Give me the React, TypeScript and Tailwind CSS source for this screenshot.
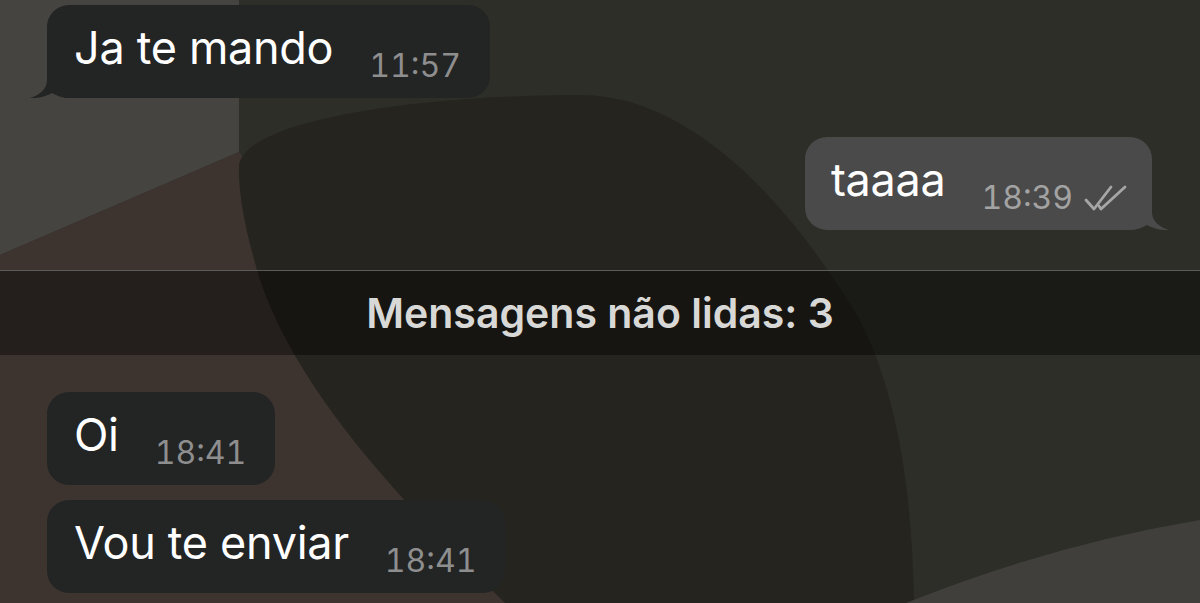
import React from "react";

const FONT = { fontFamily: 'Inter, "Noto Sans", "Liberation Sans", sans-serif' };

function Wallpaper() {
  return (
    <svg
      className="absolute inset-0"
      width="1200"
      height="603"
      viewBox="0 0 1200 603"
      aria-hidden="true"
    >
      <rect width="1200" height="603" fill="#2c2e27" />
      <polygon points="0,0 239,0 239,152 0,255" fill="#464441" />
      <polygon points="0,255 239,152 600,603 0,603" fill="#3d3430" />
      <path
        d="M 239 165 C 245 120 420 95 580 95 C 700 95 800 220 860 320 C 900 400 912 500 914 603 L 505 603 C 420 520 300 400 260 280 C 248 240 238 200 239 165 Z"
        fill="#26241f"
      />
      <path d="M 906 603 Q 1050 545 1200 520 L 1200 603 Z" fill="#403f3c" />
    </svg>
  );
}

function TailLeft({ color }: { color: string }) {
  return (
    <svg
      className="absolute left-[-17px] bottom-0"
      width="57"
      height="28"
      viewBox="0 0 57 28"
      aria-hidden="true"
    >
      <path
        d="M 17 0 L 17 10 C 17 19 10 25 0 28 C 9 28.5 17 26 22 23 C 27 26 33 28 40 28 L 57 28 L 57 0 Z"
        fill={color}
      />
    </svg>
  );
}

function TailRight({ color }: { color: string }) {
  return (
    <svg
      className="absolute right-[-17px] bottom-0"
      width="57"
      height="28"
      viewBox="0 0 57 28"
      aria-hidden="true"
    >
      <path
        d="M 40 0 L 40 10 C 40 19 47 25 57 28 C 48 28.5 40 26 35 23 C 30 26 24 28 17 28 L 0 28 L 0 0 Z"
        fill={color}
      />
    </svg>
  );
}

function DoubleCheck() {
  return (
    <svg width="44" height="28" viewBox="0 0 44 28" aria-hidden="true">
      <g
        fill="none"
        stroke="#a6a6a6"
        strokeWidth="2.8"
        strokeLinecap="round"
        strokeLinejoin="round"
      >
        <polyline points="3,16 11,25 28,3" />
        <polyline points="16,22 18,25 42,3" />
      </g>
    </svg>
  );
}

function Incoming({
  text,
  time,
  tail = false,
}: {
  text: string;
  time: string;
  tail?: boolean;
}) {
  return (
    <div className="relative ml-[47px] flex w-fit items-end rounded-[22px] bg-[#232424] pl-[27px] pr-[29px] pt-[20px] pb-[16px]">
      {tail && <TailLeft color="#232424" />}
      <span className="relative mb-[11px] text-[45px] leading-[46px] tracking-[-0.3px] text-white">
        {text}
      </span>
      <span className="relative ml-[36px] text-[32px] leading-[32px] tabular-nums text-[#8e8e8e]">
        {time}
      </span>
    </div>
  );
}

function Outgoing({ text, time }: { text: string; time: string }) {
  return (
    <div className="relative mr-[48px] flex w-fit items-end rounded-[22px] bg-[#4a4a4a] pl-[26px] pr-[25px] pt-[20px] pb-[16px]">
      <TailRight color="#4a4a4a" />
      <span className="relative mb-[11px] text-[45px] leading-[46px] tracking-[-0.3px] text-white">
        {text}
      </span>
      <span className="relative ml-[36px] text-[32px] leading-[32px] tabular-nums text-[#a3a3a3]">
        {time}
      </span>
      <span className="relative mb-[2px] ml-[10px]">
        <DoubleCheck />
      </span>
    </div>
  );
}

export default function App() {
  return (
    <div
      className="relative h-[603px] w-[1200px] overflow-hidden bg-[#2c2e27]"
      style={FONT}
    >
      <Wallpaper />
      <div className="relative flex flex-col pt-[5px]">
        <Incoming text="Ja te mando" time="11:57" tail />
        <div className="mt-[39px] flex justify-end">
          <Outgoing text="taaaa" time="18:39" />
        </div>
        <div className="mt-[40px] flex h-[85px] items-center justify-center border-t border-[#5b5b59] bg-black/40">
          <span className="text-[41px] font-semibold leading-none text-[#d8d8d6]">
            Mensagens não lidas: 3
          </span>
        </div>
        <div className="mt-[37px]">
          <Incoming text="Oi" time="18:41" />
        </div>
        <div className="mt-[15px]">
          <Incoming text="Vou te enviar" time="18:41" />
        </div>
      </div>
    </div>
  );
}
